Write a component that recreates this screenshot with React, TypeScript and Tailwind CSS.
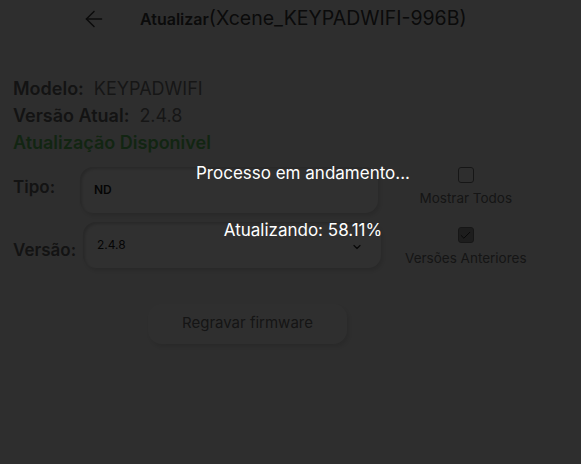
import { ArrowLeft, ChevronDown, Check } from 'lucide-react';

function Field({ label, children, labelClass }: { label: string; children: React.ReactNode; labelClass: string }) {
  return (
    <div className="flex items-center">
      <span className={`w-[67px] text-[17px] font-semibold text-[#4e4e4e] ${labelClass}`}>{label}</span>
      {children}
    </div>
  );
}

function Toggle({ label, checked }: { label: string; checked?: boolean }) {
  return (
    <div className="flex flex-col items-center gap-[5px]">
      <div
        className={`flex h-[16px] w-[16px] items-center justify-center rounded-[3px] border border-[#5a5a5a] ${
          checked ? 'bg-[#747474]' : 'bg-transparent'
        }`}
      >
        {checked && <Check size={13} strokeWidth={1.5} className="text-[#101010]" />}
      </div>
      <span className="text-[13.5px] text-[#545454]">{label}</span>
    </div>
  );
}

export default function App() {
  return (
    <div className="relative h-[464px] w-[581px] overflow-hidden bg-[#b8b8b8] font-['Inter',sans-serif]">
      <header className="flex h-[38px] items-center pl-[81px]">
        <ArrowLeft size={26} strokeWidth={1.4} className="text-[#2c2c2c]" />
        <div className="ml-[33px] flex items-baseline text-[#2c2c2c]">
          <span className="text-[16px] font-semibold">Atualizar</span>
          <span className="text-[19.5px]">(Xcene_KEYPADWIFI-996B)</span>
        </div>
      </header>

      <div className="flex flex-col gap-[5px] px-[13px] pt-[40px]">
        <div className="flex items-center text-[18px] leading-[22px]">
          <span className="font-semibold text-[#4e4e4e]">Modelo:</span>
          <span className="ml-[10px] text-[#5a5a5a]">KEYPADWIFI</span>
        </div>
        <div className="flex items-center text-[18px] leading-[22px]">
          <span className="font-semibold text-[#4e4e4e]">Versão Atual:</span>
          <span className="ml-[10px] text-[#5a5a5a]">2.4.8</span>
        </div>
        <div className="text-[18px] font-semibold leading-[22px] text-[#4a944a]">Atualização Disponivel</div>
      </div>

      <div className="flex pl-[13px] pt-[13px]">
        <div className="flex w-[370px] flex-col gap-[9px]">
          <Field label="Tipo:" labelClass="self-start pt-[8px]">
            <div className="flex h-[46px] w-[298px] items-center rounded-[13px] bg-[#c0c0c0] pl-[14px] text-[12px] font-semibold text-[#141414] shadow-[inset_2px_2px_3px_rgba(0,0,0,0.18),2px_3px_4px_rgba(0,0,0,0.12)]">
              ND
            </div>
          </Field>
          <Field label="Versão:" labelClass="pt-[12px]">
            <div className="ml-[3px] flex h-[46px] w-[298px] items-center justify-between rounded-[13px] bg-[#c0c0c0] pl-[14px] pr-[18px] text-[12px] text-[#141414] shadow-[inset_2px_2px_3px_rgba(0,0,0,0.18),2px_3px_4px_rgba(0,0,0,0.12)]">
              <span>2.4.8</span>
              <ChevronDown size={12} strokeWidth={2.5} className="mt-[4px] text-[#202020]" />
            </div>
          </Field>
        </div>
        <div className="ml-[22px] flex flex-col gap-[19px]">
          <Toggle label="Mostrar Todos" />
          <Toggle label="Versões Anteriores" checked />
        </div>
      </div>

      <div className="flex pl-[148px] pt-[35px]">
        <button className="flex h-[40px] w-[199px] items-center justify-center rounded-[14px] bg-[#bcbcbc] text-[15px] text-[#545454] shadow-[2px_3px_5px_rgba(0,0,0,0.12)]">
          Regravar firmware
        </button>
      </div>

      <div className="absolute inset-0 flex flex-col items-center bg-black/75 pl-[25px] pt-[162px] text-white">
        <p className="text-[17px] leading-[23px]">Processo em andamento...</p>
        <p className="mt-[34px] text-[17px] leading-[23px]">Atualizando: 58.11%</p>
      </div>
    </div>
  );
}
